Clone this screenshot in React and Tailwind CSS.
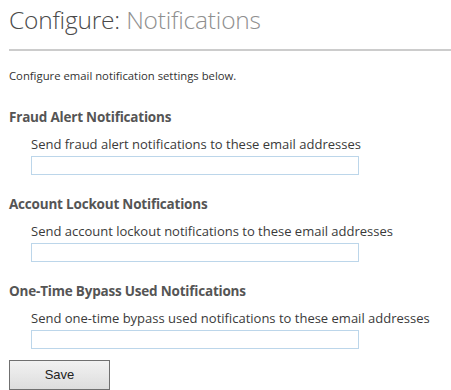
import React from "react";

const sections = [
  { title: "Fraud Alert Notifications", label: "Send fraud alert notifications to these email addresses" },
  { title: "Account Lockout Notifications", label: "Send account lockout notifications to these email addresses" },
  { title: "One-Time Bypass Used Notifications", label: "Send one-time bypass used notifications to these email addresses" },
];

export default function App() {
  return (
    <div className="w-[451px] h-[390px] overflow-hidden bg-white font-['Open_Sans',sans-serif]">
      <div className="pl-[9px] pt-[3px]">
        <h1 className="text-[24.5px] leading-[33px] font-light tracking-[-0.2px]">
          <span className="text-[#4a4a4a]">Configure: </span>
          <span className="text-[#8f8f8f]">Notifications</span>
        </h1>
        <div className="mt-[13px] h-[2px] bg-[#cccccc]" />
        <p className="mt-[17px] text-[11.3px] leading-[15px] text-[#333]">
          Configure email notification settings below.
        </p>
        <div className="mt-[26px] flex flex-col gap-[21px]">
          {sections.map((s) => (
            <div key={s.title}>
              <div className="text-[13.5px] leading-[17px] font-bold text-[#555] tracking-[-0.2px]">{s.title}</div>
              <div className="pl-[22px] mt-[9px]">
                <div className="text-[13px] leading-[18px] text-[#3a3a3a]">{s.label}</div>
                <input type="text" className="mt-[3px] block w-[328px] h-[19px] border border-[#bcd6ea] outline-none" />
              </div>
            </div>
          ))}
        </div>
        <button className="mt-[11px] w-[101px] h-[30px] border border-[#707070] bg-gradient-to-b from-[#f2f2f2] to-[#dddddd] font-['Liberation_Sans',sans-serif] text-[13px] text-[#222]">
          Save
        </button>
      </div>
    </div>
  );
}
